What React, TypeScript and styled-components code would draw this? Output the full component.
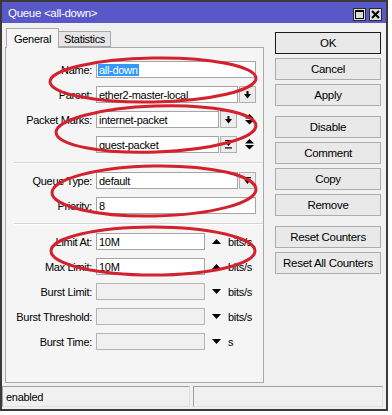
import styled, { createGlobalStyle } from 'styled-components'

const GlobalStyle = createGlobalStyle`
    html, body {
        margin: 0;
        padding: 0;
        background: #ffffff;
    }
    body {
        width: 392px;
        height: 415px;
        overflow: hidden;
        font-family: "Liberation Sans", Arial, sans-serif;
        font-size: 11px;
        letter-spacing: -0.3px;
        color: #000;
    }
`;

const Window = styled.div`
    position: relative;
    box-sizing: border-box;
    width: 388px;
    height: 411px;
    border: 2px solid #3a3a3a;
    background: #f0f0f0;
    display: flex;
    flex-direction: column;
`;

const TitleBar = styled.div`
    height: 21px;
    background: #5858c9;
    display: flex;
    align-items: center;
    justify-content: space-between;
    padding: 0 4px 0 6px;
`;

const Title = styled.span`
    color: #fff;
    font-size: 11.5px;
`;

const TitleButtons = styled.div`
    display: flex;
    gap: 3px;
    margin-top: 4px;
`;

const TitleButton = styled.div`
    width: 13px;
    height: 13px;
    box-sizing: border-box;
    border: 1px solid #2c2c2c;
    background: #dcdcdc;
    display: flex;
    align-items: center;
    justify-content: center;
`;

const Body = styled.div`
    flex: 1;
    display: flex;
    padding: 5px 5px 3px 3px;
`;

const Left = styled.div`
    width: 259px;
    display: flex;
    flex-direction: column;
`;

const Tabs = styled.div`
    display: flex;
    align-items: flex-end;
    height: 19px;
    padding-left: 1px;
`;

const Tab = styled.div<{ $active?: boolean }>`
    box-sizing: border-box;
    height: ${p => (p.$active ? '20px' : '16px')};
    padding: 0 ${p => (p.$active ? '7px' : '5px')};
    display: flex;
    align-items: center;
    border: 1px solid #a9a9a9;
    border-bottom: ${p => (p.$active ? 'none' : '1px solid #a9a9a9')};
    border-left: ${p => (p.$active ? '1px solid #a9a9a9' : 'none')};
    background: ${p => (p.$active ? '#f5f5f5' : '#e6e6e6')};
    margin-bottom: ${p => (p.$active ? '-1px' : '0')};
    position: relative;
    z-index: ${p => (p.$active ? 1 : 0)};
`;

const Panel = styled.div`
    flex: 1;
    border: 1px solid #a9a9a9;
    background: #f5f5f5;
    padding-top: 13px;
    display: flex;
    flex-direction: column;
    gap: 8px;
`;

const Row = styled.div`
    display: flex;
    align-items: center;
    height: 17px;
`;

const Label = styled.div`
    width: 86px;
    text-align: right;
    padding-right: 4px;
    white-space: nowrap;
`;

const Field = styled.div<{ $width?: number }>`
    box-sizing: border-box;
    height: 17px;
    ${p => (p.$width ? `width: ${p.$width}px;` : 'flex: 1;')}
    border: 1px solid #a5a5a5;
    background: #fff;
    display: flex;
    align-items: center;
    padding-left: 2px;
    white-space: nowrap;
    overflow: hidden;
`;

const EmptyField = styled(Field)`
    background: #f0f0f0;
    border-color: #b4b4b4;
`;

const Selected = styled.span`
    background: #3399ff;
    color: #fff;
    padding: 0 1px;
    margin-left: -1px;
`;

const Fields = styled.div`
    width: 160px;
    display: flex;
    align-items: center;
    gap: 1px;
`;

const DropButton = styled.div`
    box-sizing: border-box;
    width: 17px;
    height: 17px;
    border: 1px solid #b0b0b0;
    background: #ececec;
    display: flex;
    align-items: center;
    justify-content: center;
`;

const Spin = styled.div`
    width: 14px;
    margin-left: 4px;
    display: flex;
    justify-content: center;
`;

const Arrow = styled.div`
    width: 22px;
    display: flex;
    justify-content: center;
`;

const Unit = styled.span`
    margin-left: 1px;
`;

const Separator = styled.div`
    height: 1px;
    margin: 1px 0 0 8px;
    background: #d5d5d5;
    border-bottom: 1px solid #fff;
`;

const Right = styled.div`
    width: 106px;
    margin-left: 11px;
    padding-top: 4px;
    display: flex;
    flex-direction: column;
`;

const Group = styled.div`
    display: flex;
    flex-direction: column;
    gap: 4px;
    margin-bottom: 10px;
`;

const Button = styled.div<{ $default?: boolean }>`
    box-sizing: border-box;
    height: 22px;
    border: 1px solid ${p => (p.$default ? '#1a1a1a' : '#acacac')};
    background: #e9e9e9;
    display: flex;
    align-items: center;
    justify-content: center;
    font-size: 11.5px;
`;

const StatusBar = styled.div`
    height: 22px;
    display: flex;
    gap: 3px;
    padding: 0 3px 1px 0;
`;

const StatusBox = styled.div<{ $width: number }>`
    box-sizing: border-box;
    width: ${p => p.$width}px;
    height: 21px;
    border: 1px solid #a0a0a0;
    border-right-color: #e0e0e0;
    border-bottom-color: #e0e0e0;
    display: flex;
    align-items: center;
    padding-left: 3px;
`;

const Overlay = styled.svg`
    position: absolute;
    left: -2px;
    top: -2px;
    pointer-events: none;
`;

const Dropdown = () => (
    <svg width="7" height="8" viewBox="0 0 7 8">
        <rect x="2.5" y="0" width="2" height="3" fill="#000" />
        <polygon points="0,3 7,3 3.5,7.5" fill="#000" />
    </svg>
);

const BarDropdown = () => (
    <svg width="7" height="8" viewBox="0 0 7 8">
        <rect x="0" y="0" width="7" height="1.3" fill="#000" />
        <polygon points="0,2.5 7,2.5 3.5,7" fill="#000" />
    </svg>
);

const RemoveDropdown = () => (
    <svg width="7" height="9" viewBox="0 0 7 9">
        <rect x="0" y="0" width="7" height="1.2" fill="#000" />
        <polygon points="0.5,2.3 6.5,2.3 3.5,6" fill="#000" />
        <rect x="0" y="7.3" width="7" height="1.2" fill="#000" />
    </svg>
);

const UpDown = () => (
    <svg width="9" height="11" viewBox="0 0 9 11">
        <polygon points="4.5,0 9,4.5 0,4.5" fill="#000" />
        <polygon points="0,6 9,6 4.5,10.5" fill="#000" />
    </svg>
);

const Triangle = ({ up }: { up?: boolean }) => (
    <svg width="9" height="5" viewBox="0 0 9 5">
        <polygon points={up ? '4.5,0 9,5 0,5' : '0,0 9,0 4.5,5'} fill="#000" />
    </svg>
);

const rings = [
    { cx: 153, cy: 80, rx: 103, ry: 22, r: -1 },
    { cx: 156, cy: 129, rx: 100, ry: 23, r: -2 },
    { cx: 154, cy: 191, rx: 102, ry: 25, r: -1 },
    { cx: 153, cy: 251, rx: 102, ry: 24, r: 0 },
];

const App = () => {
    return (
        <>
            <GlobalStyle />
            <Window>
                <TitleBar>
                    <Title>Queue &lt;all-down&gt;</Title>
                    <TitleButtons>
                        <TitleButton>
                            <svg width="9" height="9" viewBox="0 0 9 9">
                                <rect x="0.5" y="0.5" width="8" height="8" fill="none" stroke="#000" />
                                <rect x="0" y="0" width="9" height="2" fill="#000" />
                            </svg>
                        </TitleButton>
                        <TitleButton>
                            <svg width="9" height="9" viewBox="0 0 9 9">
                                <path d="M1 1 L8 8 M8 1 L1 8" stroke="#000" strokeWidth="2" />
                            </svg>
                        </TitleButton>
                    </TitleButtons>
                </TitleBar>
                <Body>
                    <Left>
                        <Tabs>
                            <Tab $active>General</Tab>
                            <Tab>Statistics</Tab>
                        </Tabs>
                        <Panel>
                            <Row>
                                <Label>Name:</Label>
                                <Fields>
                                    <Field><Selected>all-down</Selected></Field>
                                </Fields>
                            </Row>
                            <Row>
                                <Label>Parent:</Label>
                                <Fields>
                                    <Field>ether2-master-local</Field>
                                    <DropButton><Dropdown /></DropButton>
                                </Fields>
                            </Row>
                            <Row>
                                <Label>Packet Marks:</Label>
                                <Fields>
                                    <Field>internet-packet</Field>
                                    <DropButton><Dropdown /></DropButton>
                                    <Spin><UpDown /></Spin>
                                </Fields>
                            </Row>
                            <Row>
                                <Label></Label>
                                <Fields>
                                    <Field>guest-packet</Field>
                                    <DropButton><RemoveDropdown /></DropButton>
                                    <Spin><UpDown /></Spin>
                                </Fields>
                            </Row>
                            <Separator />
                            <Row>
                                <Label>Queue Type:</Label>
                                <Fields>
                                    <Field>default</Field>
                                    <DropButton><BarDropdown /></DropButton>
                                </Fields>
                            </Row>
                            <Row>
                                <Label>Priority:</Label>
                                <Fields>
                                    <Field>8</Field>
                                </Fields>
                            </Row>
                            <Separator />
                            <Row>
                                <Label>Limit At:</Label>
                                <Field $width={109}>10M</Field>
                                <Arrow><Triangle up /></Arrow>
                                <Unit>bits/s</Unit>
                            </Row>
                            <Row>
                                <Label>Max Limit:</Label>
                                <Field $width={109}>10M</Field>
                                <Arrow><Triangle up /></Arrow>
                                <Unit>bits/s</Unit>
                            </Row>
                            <Row>
                                <Label>Burst Limit:</Label>
                                <EmptyField $width={109} />
                                <Arrow><Triangle /></Arrow>
                                <Unit>bits/s</Unit>
                            </Row>
                            <Row>
                                <Label>Burst Threshold:</Label>
                                <EmptyField $width={109} />
                                <Arrow><Triangle /></Arrow>
                                <Unit>bits/s</Unit>
                            </Row>
                            <Row>
                                <Label>Burst Time:</Label>
                                <EmptyField $width={109} />
                                <Arrow><Triangle /></Arrow>
                                <Unit>s</Unit>
                            </Row>
                        </Panel>
                    </Left>
                    <Right>
                        <Group>
                            <Button $default>OK</Button>
                            <Button>Cancel</Button>
                            <Button>Apply</Button>
                        </Group>
                        <Group>
                            <Button>Disable</Button>
                            <Button>Comment</Button>
                            <Button>Copy</Button>
                            <Button>Remove</Button>
                        </Group>
                        <Group>
                            <Button>Reset Counters</Button>
                            <Button>Reset All Counters</Button>
                        </Group>
                    </Right>
                </Body>
                <StatusBar>
                    <StatusBox $width={188}>enabled</StatusBox>
                    <StatusBox $width={190} />
                </StatusBar>
                <Overlay width="388" height="411" viewBox="0 0 388 411">
                    {rings.map((e, i) => (
                        <ellipse
                            key={i}
                            cx={e.cx}
                            cy={e.cy}
                            rx={e.rx}
                            ry={e.ry}
                            transform={`rotate(${e.r} ${e.cx} ${e.cy})`}
                            fill="none"
                            stroke="#d3212d"
                            strokeWidth="3"
                        />
                    ))}
                </Overlay>
            </Window>
        </>
    )
}

export default App
